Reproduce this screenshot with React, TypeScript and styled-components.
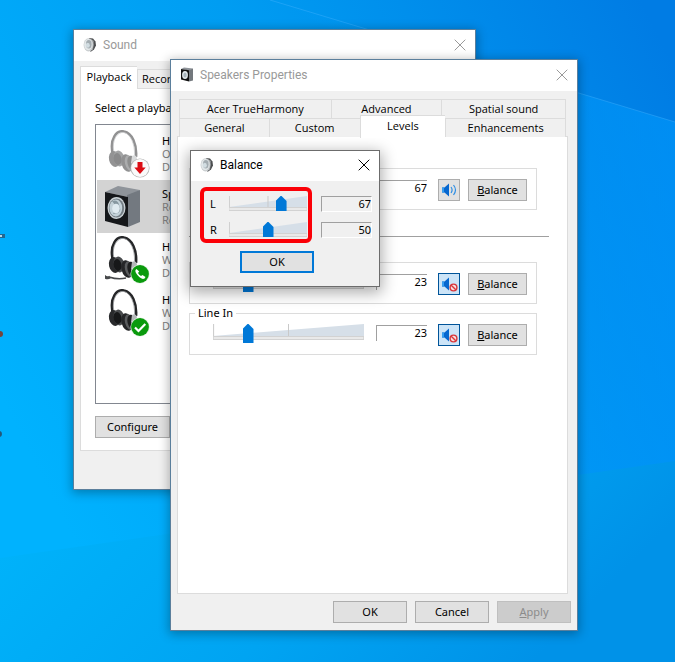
import React, { useState } from "react";
import styled, { createGlobalStyle, css } from "styled-components";

const GlobalStyle = createGlobalStyle`
  *, *::before, *::after { box-sizing: border-box; }
  body {
    margin: 0;
    font-family: "Noto Sans", "Open Sans", sans-serif;
    font-size: 11px;
    line-height: 14px;
    color: #000;
  }
  button, input, output { font: inherit; color: inherit; }
`;

const Desktop = styled.main`
  position: relative;
  min-height: 100vh;
  overflow: hidden;
  background: #00a4f8;
`;

const Wallpaper = styled.svg`
  position: absolute;
  inset: 0;
  width: 100%;
  height: 100%;
`;

const DialogWindow = styled.section<{ $x: number; $y: number; $w: number; $active?: boolean }>`
  position: absolute;
  left: ${(p) => p.$x}px;
  top: ${(p) => p.$y}px;
  width: ${(p) => p.$w}px;
  display: flex;
  flex-direction: column;
  background: #f0f0f0;
  border: 1px solid ${(p) => (p.$active ? "#6c6c6c" : "#5b7f9c")};
  box-shadow: ${(p) =>
    p.$active ? "0 4px 14px 2px rgba(0,0,0,.32)" : "0 2px 10px 1px rgba(0,0,0,.3)"};
`;

const TitleBar = styled.header<{ $active?: boolean }>`
  display: flex;
  align-items: center;
  gap: 6px;
  height: ${(p) => (p.$active ? 30 : 31)}px;
  padding: 0 9px 2px;
  background: #fff;
  color: ${(p) => (p.$active ? "#000" : "#999")};
`;

const Title = styled.h1`
  flex: 1;
  margin: 0;
  font-family: Roboto, "Open Sans", sans-serif;
  font-size: 12px;
  font-weight: 400;
  line-height: 16px;
`;

const CloseButton = styled.button`
  display: flex;
  padding: 0;
  border: 0;
  background: none;
`;

const TabRow = styled.div<{ $columns: string }>`
  display: grid;
  grid-template-columns: ${(p) => p.$columns};
  padding: 0 2px;
`;

const Tab = styled.button<{ $selected?: boolean }>`
  height: 19px;
  padding: 0;
  border: 1px solid #dcdcdc;
  border-width: 1px 0 0 1px;
  background: #f0f0f0;
  font-family: "Open Sans", "Noto Sans", sans-serif;
  font-size: 11px;
  white-space: nowrap;
  &:last-child { border-right-width: 1px; }
  ${(p) =>
    p.$selected &&
    css`
      z-index: 1;
      height: 23px;
      margin: -3px 0 -1px;
      padding: 0 0 3px;
      background: #fff;
    `}
`;

const TabPanel = styled.div<{ $h: number }>`
  min-height: ${(p) => p.$h}px;
  background: #fff;
  border: 1px solid #dcdcdc;
`;

const PushButton = styled.button<{ $w: number; $primary?: boolean }>`
  width: ${(p) => p.$w}px;
  height: 22px;
  padding: 0;
  background: #e1e1e1;
  border: ${(p) => (p.$primary ? "2px solid #0078d7" : "1px solid #adadad")};
  &:disabled {
    background: #ccc;
    border-color: #bfbfbf;
    color: #8b8b8b;
  }
`;

/* Sound window */

const SoundBody = styled.div`
  padding: 8px 6px 38px;
`;

const SoundTabs = styled.div`
  display: grid;
  grid-template-columns: 57px 60px;
  align-items: end;
  button:last-child { text-align: left; padding-left: 4px; }
`;

const SoundPanel = styled(TabPanel)`
  display: flex;
  flex-direction: column;
  align-items: flex-start;
  padding: 12px 14px;
`;

const Prompt = styled.p`
  margin: 0 0 9px;
  white-space: nowrap;
`;

const DeviceList = styled.ul`
  align-self: stretch;
  height: 280px;
  margin: 0 0 12px;
  padding: 2px 1px;
  list-style: none;
  border: 1px solid #828790;
`;

const DeviceRow = styled.li<{ $selected?: boolean }>`
  display: flex;
  gap: 11px;
  height: 53px;
  padding-left: 8px;
  align-items: center;
  background: ${(p) => (p.$selected ? "#d3d3d3" : "#fff")};
`;

const DeviceText = styled.div`
  display: flex;
  flex-direction: column;
  color: #7f7f7f;
  line-height: 13px;
  strong { color: #000; font-weight: 400; }
`;

/* Speakers Properties window */

const PropertiesBody = styled.div`
  padding: 8px 9px 7px 6px;
`;

const LevelsPanel = styled(TabPanel)`
  display: flex;
  flex-direction: column;
  margin-top: -1px;
  padding: 31px 18px 0 11px;
`;

const Channel = styled.fieldset<{ $titled: boolean }>`
  display: flex;
  align-items: flex-start;
  height: ${(p) => (p.$titled ? 49 : 42)}px;
  margin: 0 12px 0 0;
  padding: ${(p) => (p.$titled ? 4 : 10)}px 9px 0 18px;
  border: 1px solid #dcdcdc;
`;

const Legend = styled.legend`
  margin-left: -13px;
  padding: 0 3px;
  line-height: 14px;
`;

const Divider = styled.hr`
  width: 100%;
  margin: 26px 0 25px;
  border: 0;
  border-top: 1px solid #a0a0a0;
`;

const ChannelGroup = styled.div`
  display: flex;
  flex-direction: column;
  gap: 2px;
`;

const MuteButton = styled.button<{ $muted?: boolean }>`
  display: grid;
  place-items: center;
  width: 22px;
  height: 22px;
  margin: 0 8px 0 11px;
  padding: 0;
  border: 1px solid ${(p) => (p.$muted ? "#005499" : "#adadad")};
  background: ${(p) => (p.$muted ? "#cce4f7" : "#e1e1e1")};
`;

const Value = styled.output`
  width: 51px;
  height: 16px;
  border: 1px solid #a0a0a0;
  border-width: 1px 0 0 1px;
  text-align: right;
  line-height: 14px;
`;

const LevelValue = styled(Value)`
  margin: 1px 0 0 7px;
`;

const Footer = styled.footer`
  display: flex;
  justify-content: flex-end;
  gap: 8px;
  padding: 0 6px 7px;
`;

/* Volume slider */

const SliderBox = styled.div<{ $h: number }>`
  flex: 1;
  display: grid;
  height: ${(p) => p.$h}px;
  > * { grid-area: 1 / 1; min-width: 0; }
`;

const Scale = styled.svg`
  width: calc(100% - 10px);
  height: 100%;
  margin: 0 5px;
`;

const Range = styled.input<{ $thumb: number }>`
  appearance: none;
  width: 100%;
  height: 100%;
  margin: 0;
  background: transparent;
  &::-webkit-slider-runnable-track {
    height: 100%;
    display: flex;
    align-items: flex-end;
  }
  &::-webkit-slider-thumb {
    appearance: none;
    width: 11px;
    height: ${(p) => p.$thumb}px;
    background: #0078d7;
    clip-path: polygon(0 5px, 5px 0, 6px 0, 100% 5px, 100% 100%, 0 100%);
  }
`;

/* Balance dialog */

const BalanceBody = styled.div`
  display: flex;
  flex-direction: column;
  gap: 8px;
  padding: 6px 7px 13px 9px;
`;

const BalanceArea = styled.div`
  display: grid;
  grid-template-columns: 112px 51px;
  justify-content: space-between;
`;

const Highlight = styled.div`
  display: flex;
  flex-direction: column;
  gap: 10px;
  height: 56px;
  padding: 5px 0 0 6px;
  border: 4px solid #fb0007;
  border-radius: 6px;
`;

const BalanceRow = styled.div`
  display: flex;
  align-items: center;
  height: 16px;
  label { width: 14px; }
  > div { margin-right: -4px; }
`;

const BalanceValues = styled.div`
  display: flex;
  flex-direction: column;
  gap: 10px;
  padding-top: 9px;
  output {
    border: 1px solid #a0a0a0;
    border-right-color: #fff;
    border-bottom-color: #fff;
  }
`;

const BalanceActions = styled.div`
  display: flex;
  padding-left: 40px;
`;

function CloseIcon() {
  return (
    <svg width="12" height="12" viewBox="0 0 12 12" stroke="currentColor" fill="none" aria-hidden="true">
      <path d="M.7.7l10.6 10.6M11.3.7L.7 11.3" />
    </svg>
  );
}

function ConeIcon() {
  return (
    <svg width="14" height="16" viewBox="0 0 14 16" aria-hidden="true">
      <path d="M6 1l4 .5 2.500 3 .5 4-2 4-3.500 2.500z" fill="#4c4e50" />
      <path d="M8 2l3 2-1 9-3 1z" fill="#8a8e90" />
      <ellipse cx="5.500" cy="7.800" rx="4.900" ry="6.600" fill="#c9cdcf" />
      <ellipse cx="5.200" cy="7.600" rx="4" ry="5.600" fill="#e3e8ea" />
      <ellipse cx="5.800" cy="7.300" rx="2.800" ry="4.200" fill="#a3acb1" />
      <ellipse cx="4.800" cy="8.300" rx="2" ry="2.500" fill="#d2dde2" />
    </svg>
  );
}

function SmallSpeakerBox() {
  return (
    <svg width="14" height="15" viewBox="0 0 14 15" aria-hidden="true">
      <path d="M1 2l3-1.500 9 1L9 3.500z" fill="#8f949a" />
      <path d="M9 3l4-1.500v12L9 14.500z" fill="#73787d" />
      <path d="M1 2l8 1.200v11.300L1 12.500z" fill="#111" />
      <ellipse cx="5" cy="8" rx="2.900" ry="3.900" fill="#e4eaed" />
      <ellipse cx="5" cy="8" rx="1.700" ry="2.500" fill="#a9b6bd" />
    </svg>
  );
}

function LargeSpeakerBox() {
  return (
    <svg width="46" height="48" viewBox="2 0 46 48" aria-hidden="true">
      <path d="M2 9L15 3l22 4-12 7z" fill="#8f949a" />
      <path d="M24 12l13-5v32l-12 5z" fill="#737980" />
      <path d="M2 9l23 5v30L2 38z" fill="#15171a" />
      <ellipse cx="13.500" cy="25" rx="9" ry="11" fill="#c9d0d4" />
      <ellipse cx="13.500" cy="25" rx="7.700" ry="9.600" fill="#737d84" />
      <ellipse cx="12.800" cy="25" rx="6.400" ry="8.500" fill="#c3d1d8" />
      <path d="M9 18q6-2 7 4 3 5-1 8l-5 1q5-7-1-13z" fill="#8697a0" />
      <ellipse cx="13" cy="25.500" rx="3.800" ry="4.800" fill="#dfeaf0" />
    </svg>
  );
}

type Badge = "down" | "call" | "check";

function Headset({ badge }: { badge: Badge }) {
  const faded = badge === "down";
  return (
    <svg width="46" height="48" viewBox="0 0 46 48" aria-hidden="true">
      <g opacity={faded ? 0.5 : 1}>
        <path d="M8 25C4 8 12 0 19 1.500C27 3 32 14 31 27" fill="none" stroke="#252628" strokeWidth="2.600" />
        <path d="M9 23C6 9 13 1.500 19 2.500C25.500 4 30 14 29.500 25" fill="none" stroke="#9da0a2" strokeWidth=".8" />
        <ellipse cx="9.500" cy="29" rx="5.500" ry="8" transform="rotate(-12 9.500 29)" fill="#292a2c" />
        <ellipse cx="14" cy="28.500" rx="5.500" ry="8" transform="rotate(-12 14 28.500)" fill="#494b4d" />
        <ellipse cx="12.500" cy="29" rx="4" ry="6" transform="rotate(-12 12.500 29)" fill="#171819" />
        <ellipse cx="22" cy="33" rx="5.500" ry="9" transform="rotate(-14 22 33)" fill="#252628" />
        <ellipse cx="24.500" cy="33" rx="4.500" ry="8" transform="rotate(-14 24.500 33)" fill="#5a5c5e" />
        <ellipse cx="27" cy="33" rx="4.500" ry="7.500" transform="rotate(-14 27 33)" fill="#1e1f20" />
        <path d="M27 26q4-2 5 2l-2 9-4-4z" fill="#b5b8ba" />
      </g>
      {badge === "call" && (
        <g fill="none" stroke="#47494b">
          <path d="M-1 40q3 3 6 1" strokeWidth="3" />
          <path d="M4 41q9 3 17 1" strokeWidth="1.500" />
        </g>
      )}
      <circle cx="35" cy="38" r="9.600" fill={faded ? "#b4b4b4" : "#e2eee2"} />
      <circle cx="35" cy="38" r="8.900" fill={faded ? "#fafafa" : "#0a9a0d"} />
      {badge === "down" && <path d="M32.500 32h5v5.500h3.200L35 44l-5.700-6.500h3.200z" fill="#dc0d15" />}
      {badge === "check" && <path d="M30 38.500l3.500 3.500 6.800-7" fill="none" stroke="#fff" strokeWidth="2.200" />}
      {badge === "call" && (
        <path d="M31.500 33q-2 1-.5 4 3 5 7 6 2 0 2.500-2l-3-2-1.500 1q-2-1-3-3l1.200-1.500z" fill="#fff" />
      )}
    </svg>
  );
}

function VolumeIcon({ muted }: { muted: boolean }) {
  return (
    <svg width="18" height="18" viewBox="0 0 18 18" aria-hidden="true">
      <path d="M2 6.500h2.500L9 2.500v13l-4.500-4H2z" fill="#0667cf" />
      <path d="M2 6.500h2v5H2z" fill="#369df0" />
      {muted ? (
        <g fill="none" stroke="#d9363a" strokeWidth="1.400">
          <circle cx="13.500" cy="12.500" r="3.400" fill="#f7dede" />
          <path d="M11.200 10.200l4.600 4.600" />
        </g>
      ) : (
        <g fill="none" stroke="#2e8ee4" strokeWidth="1.200">
          <path d="M11 6q2.200 3 0 6M13.500 4q4 5 0 10" />
        </g>
      )}
    </svg>
  );
}

interface SliderProps {
  id: string;
  value: number;
  compact?: boolean;
  label?: string;
  onChange: (value: number) => void;
}

function Slider({ id, value, compact, label, onChange }: SliderProps) {
  const h = compact ? 16 : 20;
  const base = compact ? 13 : 14;
  return (
    <SliderBox $h={h}>
      <Scale viewBox={`0 0 100 ${h}`} preserveAspectRatio="none" aria-hidden="true">
        <path d={`M0 ${base - 2}L100 0V${base - 1}H0z`} fill="#d6dfe8" />
        <path d={`M.4 0V${base}M50 0V${base}`} stroke="#c9c9c9" vectorEffect="non-scaling-stroke" />
        <rect x="0" y={base - 2} width="100" height="4" fill="#d2d2d2" />
        <rect x=".5" y={base - 1} width="99" height="2" fill="#e9e9e9" />
      </Scale>
      <Range
        id={id}
        type="range"
        min={0}
        max={100}
        value={value}
        aria-label={label}
        $thumb={compact ? 15 : 19}
        onChange={(e) => onChange(Number(e.target.value))}
      />
    </SliderBox>
  );
}

interface LevelChannelProps {
  id: string;
  label: string;
  legend?: string;
  initial: number;
  initiallyMuted?: boolean;
}

function LevelChannel({ id, label, legend, initial, initiallyMuted = false }: LevelChannelProps) {
  const [level, setLevel] = useState(initial);
  const [muted, setMuted] = useState(initiallyMuted);
  return (
    <Channel $titled={Boolean(legend)} aria-label={label}>
      {legend && <Legend>{legend}</Legend>}
      <Slider id={id} value={level} label={label} onChange={setLevel} />
      <LevelValue htmlFor={id}>{level}</LevelValue>
      <MuteButton type="button" $muted={muted} aria-label={`Mute ${label}`} aria-pressed={muted} onClick={() => setMuted(!muted)}>
        <VolumeIcon muted={muted} />
      </MuteButton>
      <PushButton type="button" $w={59}><u>B</u>alance</PushButton>
    </Channel>
  );
}

const devices: { name: string; detail: string; status: string; badge?: Badge }[] = [
  { name: "H", detail: "O", status: "D", badge: "down" },
  { name: "Sp", detail: "Re", status: "Re" },
  { name: "H", detail: "W", status: "D", badge: "call" },
  { name: "H", detail: "W", status: "D", badge: "check" },
];

function SoundWindow() {
  return (
    <DialogWindow $x={73} $y={29} $w={403} aria-label="Sound">
      <TitleBar>
        <ConeIcon />
        <Title>Sound</Title>
        <CloseButton type="button" aria-label="Close Sound"><CloseIcon /></CloseButton>
      </TitleBar>
      <SoundBody>
        <SoundTabs role="tablist">
          <Tab role="tab" aria-selected $selected>Playback</Tab>
          <Tab role="tab" aria-label="Recording">Recor</Tab>
        </SoundTabs>
        <SoundPanel $h={360}>
          <Prompt>Select a playba</Prompt>
          <DeviceList>
            {devices.map((d, i) => (
              <DeviceRow key={i} $selected={!d.badge}>
                {d.badge ? <Headset badge={d.badge} /> : <LargeSpeakerBox />}
                <DeviceText>
                  <strong>{d.name}</strong>
                  <span>{d.detail}</span>
                  <span>{d.status}</span>
                </DeviceText>
              </DeviceRow>
            ))}
          </DeviceList>
          <PushButton type="button" $w={75}>Configure</PushButton>
        </SoundPanel>
      </SoundBody>
    </DialogWindow>
  );
}

function PropertiesWindow() {
  return (
    <DialogWindow $x={170} $y={59} $w={408} aria-label="Speakers Properties">
      <TitleBar>
        <SmallSpeakerBox />
        <Title>Speakers Properties</Title>
        <CloseButton type="button" aria-label="Close Speakers Properties"><CloseIcon /></CloseButton>
      </TitleBar>
      <PropertiesBody>
        <div role="tablist">
          <TabRow $columns="152fr 111fr 125fr">
            <Tab role="tab">Acer TrueHarmony</Tab>
            <Tab role="tab">Advanced</Tab>
            <Tab role="tab">Spatial sound</Tab>
          </TabRow>
          <TabRow $columns="90fr 91fr 86fr 121fr">
            <Tab role="tab">General</Tab>
            <Tab role="tab">Custom</Tab>
            <Tab role="tab" aria-selected $selected>Levels</Tab>
            <Tab role="tab">Enhancements</Tab>
          </TabRow>
        </div>
        <LevelsPanel $h={458}>
          <LevelChannel id="speakers" label="Speakers" initial={67} />
          <Divider />
          <ChannelGroup>
            <LevelChannel id="microphone" label="Microphone" initial={23} initiallyMuted />
            <LevelChannel id="line-in" label="Line In" legend="Line In" initial={23} initiallyMuted />
          </ChannelGroup>
        </LevelsPanel>
      </PropertiesBody>
      <Footer>
        <PushButton type="button" $w={74}>OK</PushButton>
        <PushButton type="button" $w={74}>Cancel</PushButton>
        <PushButton type="button" $w={74} disabled><u>A</u>pply</PushButton>
      </Footer>
    </DialogWindow>
  );
}

function BalanceDialog() {
  const [left, setLeft] = useState(67);
  const [right, setRight] = useState(50);
  return (
    <DialogWindow $x={190} $y={150} $w={190} $active role="dialog" aria-label="Balance">
      <TitleBar $active>
        <ConeIcon />
        <Title>Balance</Title>
        <CloseButton type="button" aria-label="Close Balance"><CloseIcon /></CloseButton>
      </TitleBar>
      <BalanceBody>
        <BalanceArea>
          <Highlight>
            <BalanceRow>
              <label htmlFor="left">L</label>
              <Slider id="left" compact value={left} onChange={setLeft} />
            </BalanceRow>
            <BalanceRow>
              <label htmlFor="right">R</label>
              <Slider id="right" compact value={right} onChange={setRight} />
            </BalanceRow>
          </Highlight>
          <BalanceValues>
            <Value htmlFor="left">{left}</Value>
            <Value htmlFor="right">{right}</Value>
          </BalanceValues>
        </BalanceArea>
        <BalanceActions>
          <PushButton type="button" $w={74} $primary>OK</PushButton>
        </BalanceActions>
      </BalanceBody>
    </DialogWindow>
  );
}

export default function App() {
  return (
    <Desktop>
      <GlobalStyle />
      <Wallpaper viewBox="0 0 675 662" preserveAspectRatio="none" aria-hidden="true">
        <defs>
          <linearGradient id="sky" x1="0" y1=".6" x2="1" y2=".1">
            <stop offset="0" stopColor="#00b2fe" />
            <stop offset=".5" stopColor="#009df2" />
            <stop offset="1" stopColor="#007ce4" />
          </linearGradient>
          <linearGradient id="ray" x1="0" y1="0" x2="1" y2="0">
            <stop offset="0" stopColor="#009cfa" stopOpacity="0" />
            <stop offset="1" stopColor="#0098fc" stopOpacity=".6" />
          </linearGradient>
          <linearGradient id="floor" x1="0" y1="0" x2="1" y2=".3">
            <stop offset="0" stopColor="#00b6fc" />
            <stop offset=".6" stopColor="#00a4f2" />
            <stop offset="1" stopColor="#0092e8" />
          </linearGradient>
        </defs>
        <path d="M0 0h675v662H0z" fill="url(#sky)" />
        <path d="M270 0L675 122V470L400 500V60z" fill="url(#ray)" />
        <path d="M0 558L675 461V662H0z" fill="url(#floor)" />
        <path d="M270 0L675 122" stroke="#45b5ff" strokeOpacity=".4" />
        <path d="M0 234h5v4H0z" fill="#24668f" />
        <path d="M0 235h2v2H0z" fill="#b5d8e8" />
        <circle cx="0" cy="334" r="3" fill="#75443c" />
        <circle cx="-1" cy="434" r="3" fill="#245879" />
      </Wallpaper>
      <SoundWindow />
      <PropertiesWindow />
      <BalanceDialog />
    </Desktop>
  );
}
